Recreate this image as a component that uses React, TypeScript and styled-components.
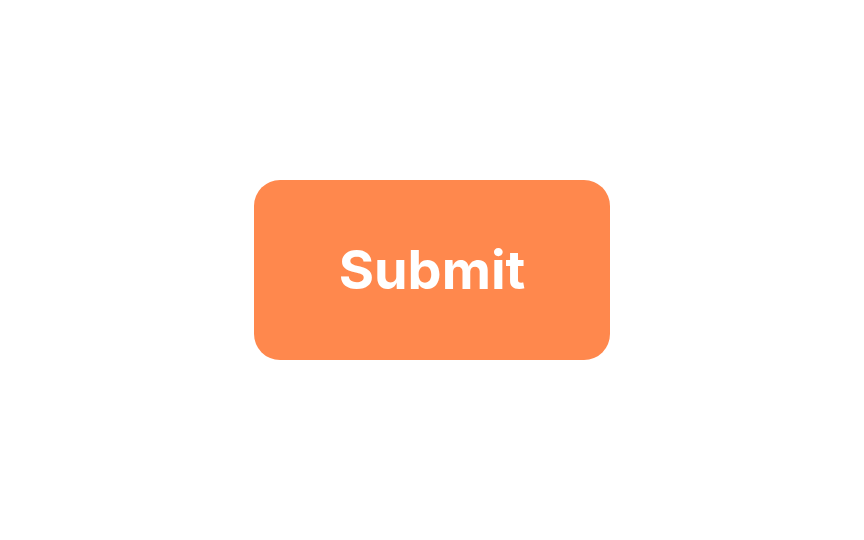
import React from "react";
import styled, { createGlobalStyle } from "styled-components";

const GlobalStyle = createGlobalStyle`
    html, body {
        margin: 0;
        padding: 0;
        background: #ffffff;
    }

    body {
        font-family: 'Inter', 'Liberation Sans', sans-serif;
    }
`;

const Page = styled.div`
    width: 100vw;
    height: 100vh;
    display: flex;
    justify-content: center;
    align-items: center;
`;

const SubmitButton = styled.button`
    width: 356px;
    height: 180px;
    border: none;
    border-radius: 26px;
    background-color: #ff884d;
    color: #ffffff;
    font-family: 'Inter', 'Liberation Sans', sans-serif;
    font-weight: 700;
    font-size: 54px;
    line-height: 1;
    cursor: pointer;
    padding: 0;
`;

const App = () => {
    return (
        <>
            <GlobalStyle />
            <Page>
                <SubmitButton type="button">Submit</SubmitButton>
            </Page>
        </>
    );
};

export default App;
